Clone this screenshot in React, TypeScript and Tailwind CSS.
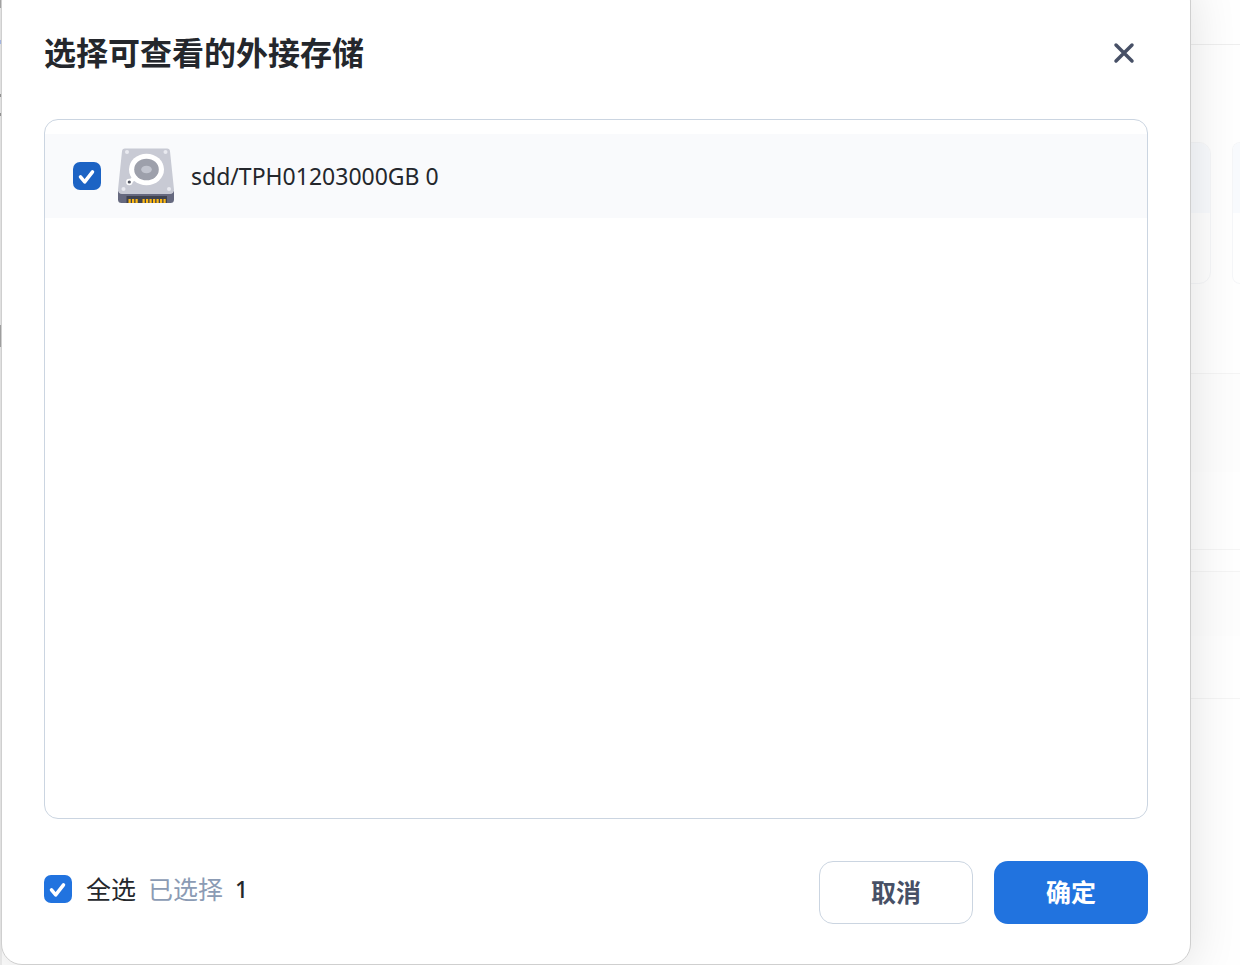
import React, { useState } from 'react';

interface StorageDevice {
  id: string;
  name: string;
}

const DEVICES: StorageDevice[] = [{ id: 'sdd', name: 'sdd/TPH01203000GB 0' }];

const PINS = [10, 13.5, 17, 24, 27.5, 31, 34.5, 38, 41.5, 45];

function DiskIcon() {
  return (
    <svg viewBox="0 0 58 56" className="h-14 w-[58px] shrink-0" aria-hidden="true">
      <path d="M1 43h56v8.500a3.500 3.500 0 0 1-3.500 3.500h-49a3.500 3.500 0 0 1-3.500-3.500z" fill="#66697f" />
      <path d="M8 0.500h42a3 3 0 0 1 3 2.700L57 41.500a4 4 0 0 1-4 4.500H5a4 4 0 0 1-4-4.500L5 3.200A3 3 0 0 1 8 0.500z" fill="#c8cad4" />
      <path d="M9.500 48h40.500v7H9.500z" fill="#40434f" />
      {PINS.map((x) => (
        <rect key={x} x={x + 1.5} y="51" width="2.200" height="4" fill="#fcb814" />
      ))}
      <g fill="#e9eaf0">
        <circle cx="10" cy="4" r="2" />
        <circle cx="48.500" cy="4" r="2" />
        <circle cx="6.500" cy="41" r="2" />
        <circle cx="52" cy="41" r="2" />
      </g>
      <ellipse cx="29.500" cy="21.500" rx="17.500" ry="15.800" fill="#fff" />
      <path d="M18 29l-5 5" stroke="#fff" strokeWidth="4" />
      <circle cx="12.300" cy="34" r="3.200" fill="#fff" />
      <circle cx="12.300" cy="34" r="1.600" fill="#50535f" />
      <ellipse cx="29.500" cy="21.500" rx="12.300" ry="10.800" fill="#9da0ab" />
      <ellipse cx="29.500" cy="21.500" rx="5.300" ry="3.800" fill="#c2c5cf" />
    </svg>
  );
}

interface CheckboxProps {
  id: string;
  checked: boolean;
  dark?: boolean;
  onChange: (checked: boolean) => void;
}

function Checkbox({ id, checked, dark, onChange }: CheckboxProps) {
  return (
    <span className="relative block h-7 w-7 shrink-0">
      <input
        id={id}
        type="checkbox"
        checked={checked}
        onChange={(e) => onChange(e.target.checked)}
        className={`block h-7 w-7 cursor-pointer appearance-none rounded-[7px] border border-[#cbd5e1] bg-white checked:border-0 ${
          dark ? 'checked:bg-[#1c63c4]' : 'checked:bg-[#2173df]'
        }`}
      />
      {checked && (
        <svg viewBox="0 0 28 28" className="pointer-events-none absolute inset-0 h-7 w-7" fill="none" aria-hidden="true">
          <path d="M7.500 14.800l4.200 5L19.500 9.800" stroke="#fff" strokeWidth="3.500" strokeLinecap="round" strokeLinejoin="round" />
        </svg>
      )}
    </span>
  );
}

// Page behind the dialog, only its edges stay visible
function PageBackdrop() {
  return (
    <div className="flex min-h-screen bg-[#fefefe]" aria-hidden="true">
      <div className="flex w-0.5 shrink-0 flex-col bg-[#eeeeee]">
        <div className="h-2 bg-[#aaaaaa]" />
        <div className="mt-8 h-1 bg-[#adc0ee]" />
        <div className="mt-[50px] h-[3px] bg-[#999999]" />
        <div className="mt-4 h-[3px] bg-[#999999]" />
        <div className="mt-[209px] h-[22px] bg-[#a8a8a8]" />
      </div>
      <div className="flex grow flex-col">
        <div className="h-[45px] border-b border-[#eeeeee]" />
        <div className="flex h-[328px] items-start justify-end gap-[21px] overflow-hidden pt-[97px]">
          <div className="h-[142px] grow overflow-hidden rounded-xl border border-[#f5f6f8]">
            <div className="h-[70px] bg-[#f8fafd]" />
          </div>
          <div className="h-[142px] w-2 overflow-hidden rounded-l-xl border border-r-0 border-[#f5f6f8]">
            <div className="h-[70px] bg-[#f8fafd]" />
          </div>
        </div>
        <div className="h-[177px] border-y border-[#f4f4f4]">
          <div className="h-[98px] bg-[#fdfdfd]" />
        </div>
        <div className="mt-[21px] h-32 border-y border-[#f4f4f4]">
          <div className="h-16 bg-[#fdfdfd]" />
        </div>
      </div>
    </div>
  );
}

export default function App() {
  const [selected, setSelected] = useState<string[]>(DEVICES.map((d) => d.id));

  const toggle = (id: string, checked: boolean) => {
    setSelected((prev) => (checked ? [...prev, id] : prev.filter((s) => s !== id)));
  };

  return (
    <div className="relative min-h-screen overflow-hidden font-['Noto_Sans','Noto_Sans_CJK_SC',sans-serif] text-[#24272c]">
      <PageBackdrop />

      <div
        role="dialog"
        aria-labelledby="dialog-title"
        className="absolute -top-5 right-[49px] left-px rounded-[21px] border border-[#cfcfcf] bg-white px-[42px] pt-12 pb-10 shadow-[0_4px_48px_rgba(0,0,0,0.12)]"
      >
        {/* Header */}
        <div className="flex items-center justify-between">
          <h1 id="dialog-title" className="text-[32px] leading-12 font-bold">
            选择可查看的外接存储
          </h1>
          <button type="button" aria-label="关闭" className="mr-2 flex h-8 w-8 cursor-pointer items-center justify-center">
            <svg viewBox="0 0 32 32" className="h-8 w-8" fill="none" aria-hidden="true">
              <path d="M8 8l16 16M24 8L8 24" stroke="#475066" strokeWidth="3.500" strokeLinecap="round" />
            </svg>
          </button>
        </div>

        {/* Device list */}
        <ul className="mt-[42px] h-[700px] overflow-y-auto rounded-[14px] border border-[#cbd5e1] py-3.5">
          {DEVICES.map((device) => (
            <li key={device.id} className="flex h-[84px] items-center bg-[#f9fafc] px-7">
              <Checkbox id={device.id} dark checked={selected.includes(device.id)} onChange={(c) => toggle(device.id, c)} />
              <label htmlFor={device.id} className="ml-4 flex cursor-pointer items-center gap-4 text-[23px]">
                <DiskIcon />
                {device.name}
              </label>
            </li>
          ))}
        </ul>

        {/* Footer */}
        <div className="mt-[42px] flex items-start justify-between">
          <div className="mt-2.5 flex items-center text-[25px] leading-9">
            <Checkbox
              id="select-all"
              checked={selected.length === DEVICES.length}
              onChange={(c) => setSelected(c ? DEVICES.map((d) => d.id) : [])}
            />
            <label htmlFor="select-all" className="ml-3.5 cursor-pointer">
              全选
            </label>
            <span className="ml-3 text-[#8b9bb4]">已选择</span>
            <span className="ml-3 text-[23px] font-medium">{selected.length}</span>
          </div>
          <div className="flex gap-[21px] text-[25px] font-bold">
            <button type="button" className="h-[63px] w-[154px] cursor-pointer rounded-[14px] border border-[#cbd5e1] bg-white text-[#475066]">
              取消
            </button>
            <button type="button" className="h-[63px] w-[154px] cursor-pointer rounded-[14px] bg-[#2173df] text-white">
              确定
            </button>
          </div>
        </div>
      </div>
    </div>
  );
}
